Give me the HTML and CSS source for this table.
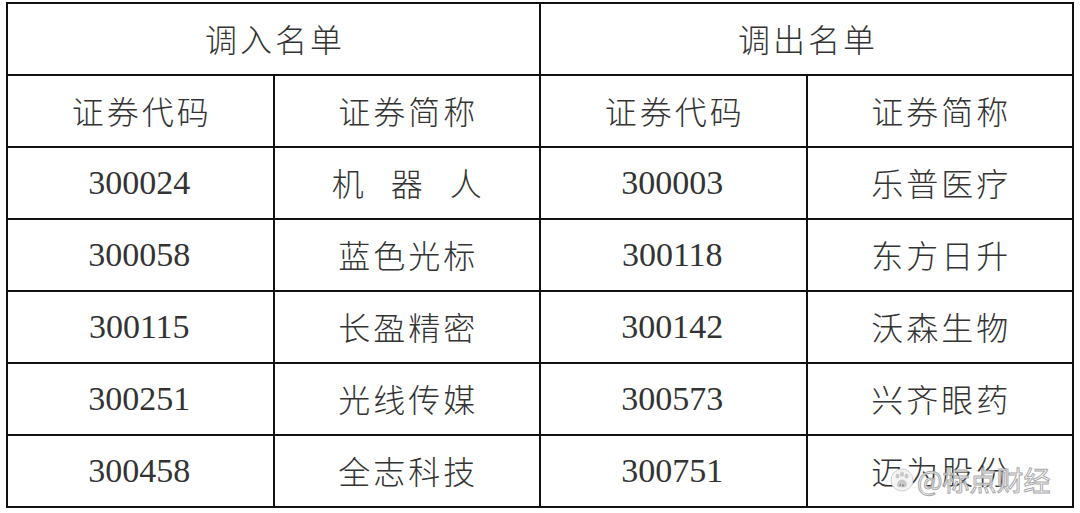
FILE: index.html
```html
<!DOCTYPE html>
<html>
<head>
<meta charset="utf-8">
<title>调入调出名单</title>
<link rel="stylesheet" href="styles.css">
</head>
<body>
<div class="sheet">
  <div class="grid">
    <div class="cell span2">调入名单</div>
    <div class="cell span2">调出名单</div>
    <div class="cell">证券代码</div>
    <div class="cell">证券简称</div>
    <div class="cell">证券代码</div>
    <div class="cell">证券简称</div>

    <div class="cell num">300024</div>
    <div class="cell"><span class="spaced">机 器 人</span></div>
    <div class="cell num">300003</div>
    <div class="cell">乐普医疗</div>

    <div class="cell num">300058</div>
    <div class="cell">蓝色光标</div>
    <div class="cell num">300118</div>
    <div class="cell">东方日升</div>

    <div class="cell num">300115</div>
    <div class="cell">长盈精密</div>
    <div class="cell num">300142</div>
    <div class="cell">沃森生物</div>

    <div class="cell num">300251</div>
    <div class="cell">光线传媒</div>
    <div class="cell num">300573</div>
    <div class="cell">兴齐眼药</div>

    <div class="cell num">300458</div>
    <div class="cell">全志科技</div>
    <div class="cell num">300751</div>
    <div class="cell">迈为股份</div>
  </div>
  <div class="watermark">
    <svg class="paw" width="24" height="24" viewBox="0 0 24 24">
      <circle cx="12" cy="12" r="11" fill="#f4f4f4" stroke="#d0d0d0" stroke-width="1"/>
      <ellipse cx="7.5" cy="8" rx="2" ry="2.6" fill="#c8c8c8"/>
      <ellipse cx="12" cy="6.2" rx="2" ry="2.6" fill="#c8c8c8"/>
      <ellipse cx="16.5" cy="8" rx="2" ry="2.6" fill="#c8c8c8"/>
      <path d="M7 17c0-3 2.5-5.5 5-5.5s5 2.5 5 5.5c0 1.6-1.6 2.3-5 2.3S7 18.6 7 17z" fill="#c8c8c8"/>
      <path d="M10 16.5v1.6M10 16.5h1M12.5 16.5v1.6h1.2v-1.6" stroke="#666" stroke-width="0.6" fill="none"/>
    </svg>
    <span class="wm-text">@标点财经</span>
  </div>
</div>
</body>
</html>
```
FILE: styles.css
```css
html, body {
  margin: 0;
  padding: 0;
  background: #ffffff;
}

.sheet {
  position: relative;
  width: 1080px;
  height: 513px;
  padding: 2px 0 0 6px;
  box-sizing: border-box;
}

.grid {
  width: 1068px;
  display: grid;
  grid-template-columns: 1fr 1fr 1fr 1fr;
  grid-auto-rows: 70px;
  gap: 2px;
  padding: 2px;
  box-sizing: border-box;
  background: #111111;
}

.cell {
  background: #ffffff;
  display: flex;
  align-items: center;
  justify-content: center;
  font-family: "Noto Sans CJK SC", sans-serif;
  font-size: 32px;
  font-weight: 300;
  letter-spacing: 3px;
  color: #333333;
  padding: 0 0 2px 3px;
}

.span2 {
  grid-column: span 2;
}

.cell.num {
  font-family: "Liberation Serif", serif;
  font-size: 34px;
  font-weight: 400;
  letter-spacing: 0;
  color: #333333;
  padding: 0 2px 0 0;
}

.spaced {
  word-spacing: 14px;
}

.watermark {
  position: absolute;
  left: 890px;
  top: 460px;
  display: flex;
  align-items: center;
  gap: 3px;
}

.paw {
  display: block;
}

.wm-text {
  font-family: "Noto Sans CJK SC", sans-serif;
  font-size: 27px;
  font-weight: 400;
  color: rgba(255, 255, 255, 0.75);
  -webkit-text-stroke: 1px #a9a9a9;
  letter-spacing: 0;
}
```
